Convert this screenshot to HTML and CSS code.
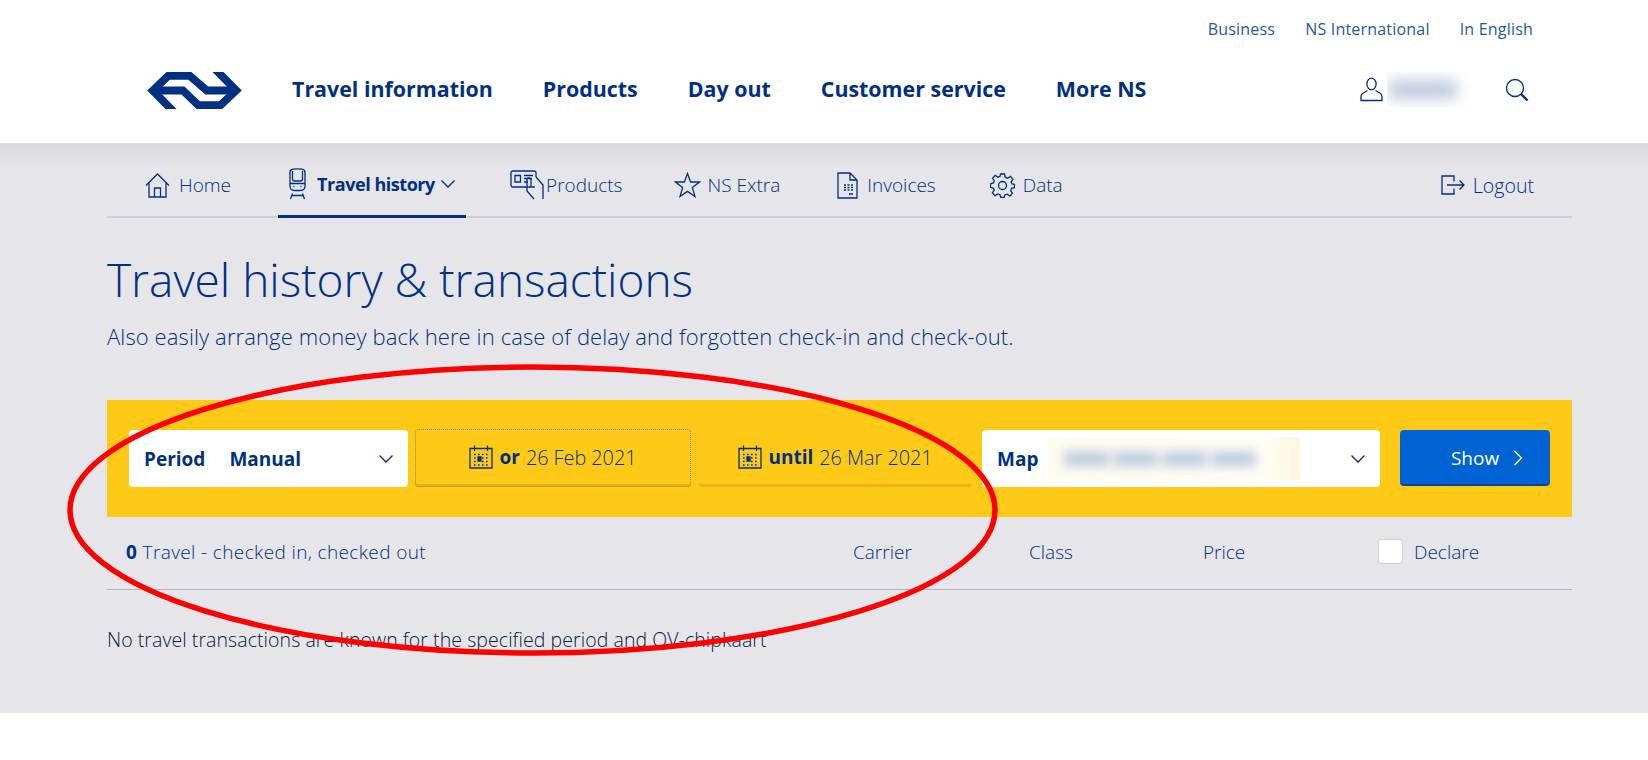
FILE: index.html
```html
<!DOCTYPE html>
<html lang="en">
<head>
  <meta charset="UTF-8" />
  <meta name="viewport" content="width=device-width, initial-scale=1.0" />
  <title>Travel history &amp; transactions</title>
  <link rel="stylesheet" href="styles.css">
</head>
<body>
  <header class="site-header">
    <div class="top-links">
      <a href="#">Business</a>
      <a href="#">NS International</a>
      <a href="#">In English</a>
    </div>
    <div class="main-nav">
      <a href="#" class="logo" aria-label="NS">
        <svg width="95" height="37" viewBox="0 0 278 108" fill="none" stroke="#003082" stroke-width="23">
          <path d="M82 120L17 54L62 11H125L175 54H250"/>
          <path d="M196 -12L261 54L215 97H150L105 54H28"/>
        </svg>
      </a>
      <nav class="main-links">
        <a href="#">Travel information</a>
        <a href="#">Products</a>
        <a href="#">Day out</a>
        <a href="#">Customer service</a>
        <a href="#">More NS</a>
      </nav>
      <div class="user-box">
        <svg class="icon" width="23" height="25" viewBox="0 0 23 25">
          <ellipse cx="11.5" cy="7" rx="4.6" ry="5.8"/>
          <path d="M7.5 13.5L2.5 16.5Q1 17.5 1 20V23.5H22V20Q22 17.5 20.5 16.5L15.5 13.5"/>
        </svg>
        <div class="user-name"><span></span></div>
        <svg class="icon search" width="24" height="24" viewBox="0 0 24 24">
          <circle cx="10" cy="10" r="8.5"/>
          <path d="M16 16L22.5 22.5" stroke-width="2.4"/>
        </svg>
      </div>
    </div>
  </header>

  <main class="account">
    <nav class="tabs">
      <a href="#" class="tab tab-home">
        <svg class="icon" width="25" height="25" viewBox="0 0 25 25">
          <path d="M1 12.5L12.5 1L24 12.5M4 10V24H21V10M9.5 24V15H15.5V24"/>
        </svg>
        Home
      </a>
      <a href="#" class="tab tab-active">
        <svg class="icon" width="19" height="32" viewBox="0 0 19 32">
          <path d="M2 4.5Q2 1.5 5 1.2Q9.5 .6 14 1.2Q17 1.5 17 4.5V18Q17 22.5 12.5 22.5H6.5Q2 22.5 2 18Z"/>
          <path d="M4.5 3V11Q4.5 13 6.5 13H12.5Q14.5 13 14.5 11V3M2 15.5H17"/>
          <path d="M5.5 18.5H6.5M12.5 18.5H13.5M4.5 25.5L2.5 31M14.5 25.5L16.5 31M3.5 27.5H15.5"/>
        </svg>
        <b>Travel history</b>
        <svg class="icon" width="14" height="8" viewBox="0 0 14 8"><path d="M.5 .5L7 7L13.5 .5"/></svg>
      </a>
      <a href="#" class="tab tab-products">
        <svg class="icon" width="35" height="30" viewBox="0 0 35 30">
          <path d="M25 17H3Q1 17 1 15V3Q1 1 3 1H24Q26 1 26 3V7"/>
          <path d="M5 5.5H10.5V12H5ZM14 5.5H23M14 8.5H22M14 12H18"/>
          <path d="M26 7L33 15V29M24 29L17 21V10Q17 8 19 8Q21 8 21 10V17"/>
        </svg>
        Products
      </a>
      <a href="#" class="tab tab-extra">
        <svg class="icon" width="27" height="26" viewBox="0 0 27 26">
          <path d="M13.5 1.5L16.6 10H25.5L18.4 15.6L21 24.5L13.5 19.4L6 24.5L8.6 15.6L1.5 10H10.4Z"/>
        </svg>
        NS Extra
      </a>
      <a href="#" class="tab tab-invoices">
        <svg class="icon" width="21" height="27" viewBox="0 0 21 27">
          <path d="M1 1H13L20 8V26H1ZM13 1V8H20"/>
          <path d="M7 13H9M10.5 13H12.5M14 13H16M7 15.5H9M10.5 15.5H12.5M14 15.5H16M7 18H9M10.5 18H12.5M14 18H16M12 22H16"/>
        </svg>
        Invoices
      </a>
      <a href="#" class="tab tab-data">
        <svg class="icon" width="25" height="25" viewBox="0 0 25 25">
          <circle cx="12.5" cy="12.5" r="4"/>
          <path d="M10.5 1H14.5L15.2 4.2L17.6 5.2L20.4 3.4L23 6.2L21 9L22 11L24.5 11.4V14.6L21.6 15.4L20.8 17.6L22.4 20.4L19.8 23L17 21.2L14.8 22L14.2 24.5H10.8L10 21.8L7.8 21L5 22.6L2.4 20L4.2 17.2L3.2 15L.5 14.4V10.8L3.4 10L4.2 7.8L2.6 5L5.2 2.4L8 4.2L10 3.4Z"/>
        </svg>
        Data
      </a>
      <a href="#" class="tab tab-logout">
        <svg class="icon" width="24" height="20" viewBox="0 0 24 20">
          <path d="M13 6.5V1H1V19H13V13.5M6 10H23M18.5 5.5L23 10L18.5 14.5"/>
        </svg>
        Logout
      </a>
    </nav>

    <h1>Travel history &amp; transactions</h1>
    <p class="intro">Also easily arrange money back here in case of delay and forgotten check-in and check-out.</p>

    <form class="filter">
      <div class="select select-period">
        <b>Period</b>
        <b class="select-value">Manual</b>
        <svg class="icon chevron" width="14" height="8" viewBox="0 0 14 8"><path d="M.5 .5L7 7L13.5 .5"/></svg>
      </div>
      <button type="button" class="date date-from">
        <svg class="icon" width="24" height="24" viewBox="0 0 24 24">
          <use href="#calendar"/>
        </svg>
        <b>or</b> 26 Feb 2021
      </button>
      <button type="button" class="date date-until">
        <svg class="icon" width="24" height="24" viewBox="0 0 24 24">
          <use href="#calendar"/>
        </svg>
        <b>until</b> 26 Mar 2021
      </button>
      <div class="select select-map">
        <b>Map</b>
        <div class="card-number"><span></span><span></span><span></span><span></span></div>
        <svg class="icon chevron" width="14" height="8" viewBox="0 0 14 8"><path d="M.5 .5L7 7L13.5 .5"/></svg>
      </div>
      <button type="button" class="show">
        Show
        <svg width="10" height="16" viewBox="0 0 10 16" fill="none" stroke="#fff" stroke-width="1.3"><path d="M1.5 1L8.5 8L1.5 15"/></svg>
      </button>
    </form>

    <div class="list-head">
      <div class="col-travel"><b>0</b> Travel - checked in, checked out</div>
      <div class="col-carrier">Carrier</div>
      <div class="col-class">Class</div>
      <div class="col-price">Price</div>
      <label class="col-declare"><span class="checkbox"></span>Declare</label>
    </div>

    <p class="empty">No travel transactions are known for the specified period and OV-chipkaart</p>
  </main>

  <svg width="0" height="0" class="defs">
    <symbol id="calendar" viewBox="0 0 24 24">
      <path d="M1 3.5H23V23H1ZM5.5 .5V6M18.5 .5V6"/>
      <path class="cal-dots" d="M5 9.5H7M9 9.5H11M13 9.5H15M17 9.5H19M5 13H7M13 13H15M17 13H19M5 16.5H7M13 16.5H15M17 16.5H19M5 20H7M9 20H11M13 20H15M17 20H19"/>
      <path class="cal-today" d="M9 12H12V16H9Z"/>
    </symbol>
  </svg>

  <!-- red marker drawn on top of the screenshot -->
  <svg class="marker" width="950" height="300" viewBox="0 0 950 300">
    <ellipse cx="466.500" cy="147" rx="462.500" ry="143"/>
  </svg>
</body>
</html>
```

FILE: styles.css
```css
* {
  box-sizing: border-box;
}
body {
  margin: 0;
  background-color: #fff;
  font-family: "Open Sans", Arial, sans-serif;
  font-weight: 300;
  font-size: 19px;
  color: #003082;
  overflow: hidden;
}
a {
  color: inherit;
  text-decoration: none;
}
b {
  font-weight: 700;
}
.icon {
  flex: none;
  fill: none;
  stroke: #003082;
  stroke-width: 1.3;
}
.defs {
  position: absolute;
}
.cal-dots {
  stroke-width: 1.6;
  stroke-dasharray: 1.6 1;
}
.cal-today {
  fill: #003082;
}

/* white header */
.site-header {
  height: 143px;
  background-color: #fff;
}
.top-links {
  display: flex;
  justify-content: flex-end;
  gap: 30px;
  height: 58px;
  padding: 18px 115px 0 0;
  font-size: 16px;
  line-height: 22px;
  font-weight: 400;
  letter-spacing: .2px;
}
.top-links a {
  color: #1a5a9e;
}
.main-nav {
  display: flex;
  align-items: center;
  height: 60px;
  padding-left: 147px;
}
.logo {
  display: flex;
  width: 145px;
  margin-top: 4px;
}
.main-links {
  display: flex;
  gap: 50px;
  font-size: 21.4px;
  font-weight: 700;
}
.user-box {
  display: flex;
  align-items: center;
  margin-top: 3px;
  margin-left: auto;
  margin-right: 119px;
}
.user-name {
  width: 85px;
  height: 35px;
  margin-left: 4px;
  overflow: hidden;
  position: relative;
}
.user-name span {
  position: absolute;
  left: 2px;
  top: 9px;
  width: 68px;
  height: 17px;
  background-color: #b4c2da;
  filter: blur(8px);
}
.search {
  margin-left: 33px;
}

/* grey account area */
.account {
  height: 570px;
  padding: 0 76px 0 107px;
  background: linear-gradient(#dadade, #e5e5ea 24px);
}
.tabs {
  display: flex;
  align-items: stretch;
  height: 75px;
  border-bottom: 2px solid #cfcfd6;
}
.tab {
  display: flex;
  align-items: center;
  gap: 9px;
  height: 75px;
  padding-top: 9px;
}
.tab-home {
  margin-left: 38px;
}
.tab-active {
  width: 188px;
  margin-left: 47px;
  padding: 10px 0 0 10px;
  border-bottom: 3px solid #003082;
}
.tab-active b {
  margin-left: 1px;
  font-size: 18px;
  letter-spacing: -.45px;
}
.tab-active b + svg {
  margin-left: -3px;
}
.tab-products {
  margin-left: 44px;
  gap: 1px;
}
.tab-extra {
  margin-left: 52px;
  gap: 6px;
}
.tab-invoices {
  margin-left: 57px;
}
.tab-data {
  margin-left: 54px;
  gap: 8px;
}
.tab-logout {
  margin-left: auto;
  margin-right: 38px;
  gap: 8px;
  font-size: 19.6px;
}
h1 {
  margin: 28px 0 0;
  font-size: 46px;
  line-height: 66px;
  font-weight: 300;
}
.intro {
  margin: 9px 0 0;
  font-size: 22px;
  line-height: 30px;
  letter-spacing: .11px;
}

/* yellow filter bar */
.filter {
  display: flex;
  align-items: flex-start;
  height: 117px;
  margin-top: 49px;
  padding: 30px 22px 0;
  background-color: #ffc917;
}
.select {
  display: flex;
  align-items: center;
  height: 57px;
  padding: 0 15px;
  background-color: #fff;
  border-radius: 4px;
}
.select-period {
  width: 279px;
}
.select-value {
  margin-left: 24px;
}
.chevron {
  margin-left: auto;
}
.date {
  display: flex;
  align-items: center;
  justify-content: center;
  gap: 6px;
  height: 58px;
  margin-top: -1px;
  padding-top: 2px;
  background: none;
  border: 0;
  border-bottom: 3px solid #e5b415;
  border-radius: 4px;
  font: inherit;
  font-size: 19.8px;
  color: inherit;
}
.date b {
  font-size: 19px;
}
.date-from {
  width: 276px;
  margin-left: 7px;
  outline: 1px dotted #8d8a70;
  outline-offset: -1px;
}
.date-until {
  width: 273px;
  margin-left: 8px;
}
.select-map {
  width: 398px;
  margin-left: 10px;
}
.card-number {
  display: flex;
  align-items: center;
  gap: 4px;
  width: 252px;
  height: 43px;
  margin-left: 10px;
  padding-left: 16px;
  overflow: hidden;
  background: linear-gradient(90deg, #fffbef, #fffdf6 85%, #fff6de);
}
.card-number span {
  width: 45px;
  height: 14px;
  background-color: #b8c8de;
  filter: blur(6px);
}
.show {
  display: flex;
  align-items: center;
  justify-content: center;
  gap: 14px;
  width: 150px;
  height: 56px;
  margin-left: 20px;
  padding: 1px 0 0 24px;
  background-color: #0063d3;
  border: 0;
  border-bottom: 2px solid #004a9e;
  border-radius: 4px;
  font: inherit;
  font-weight: 400;
  color: #fff;
}

/* list head */
.list-head {
  display: grid;
  grid-template-columns: 727px 176px 174px 175px auto;
  align-items: center;
  height: 73px;
  padding: 0 0 2px 19px;
  border-bottom: 1px solid #b4b4ba;
}
.col-travel {
  letter-spacing: .38px;
}
.col-declare {
  display: flex;
  align-items: center;
  gap: 11px;
  margin-top: -1px;
}
.checkbox {
  width: 25px;
  height: 25px;
  background-color: #fff;
  border: 1px solid #cfcfd6;
  border-radius: 3px;
}
.empty {
  margin: 37px 0 0;
  font-size: 19.5px;
  line-height: 26px;
  letter-spacing: .07px;
  color: #0a1a3c;
}

/* red marker */
.marker {
  position: absolute;
  left: 66px;
  top: 363px;
  fill: none;
  stroke: #f00;
  stroke-width: 5.5;
  pointer-events: none;
}
```
